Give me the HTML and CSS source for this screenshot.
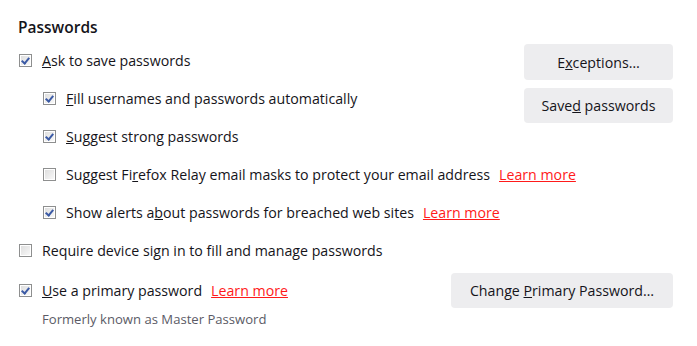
FILE: index.html
```html
<!DOCTYPE html>
<html lang="en">
<head>
<meta charset="utf-8">
<title>Passwords</title>
<link rel="stylesheet" href="styles.css">
</head>
<body>
<main class="section">
  <h2 class="title">Passwords</h2>
  <div class="top">
    <label class="row"><span class="cb checked"></span><span><u>A</u>sk to save passwords</span></label>
    <div class="buttons">
      <button class="btn btn-exc">E<u>x</u>ceptions…</button>
      <button class="btn btn-saved">Save<u>d</u> passwords</button>
    </div>
    <label class="row sub"><span class="cb checked"></span><span><u>F</u>ill usernames and passwords automatically</span></label>
    <label class="row sub full"><span class="cb checked"></span><span><u>S</u>uggest strong passwords</span></label>
    <label class="row sub full"><span class="cb"></span><span>Suggest Fi<u>r</u>efox Relay email masks to protect your email address</span><a class="link" href="#">Learn more</a></label>
    <label class="row sub full"><span class="cb checked"></span><span>Show alerts a<u>b</u>out passwords for breached web sites</span><a class="link" href="#">Learn more</a></label>
    <label class="row full"><span class="cb"></span><span>Require device sign in to fill and manage passwords</span></label>
  </div>
  <div class="primary">
    <label class="row"><span class="cb checked"></span><span><u>U</u>se a primary password</span><a class="link" href="#">Learn more</a></label>
    <button class="btn btn-primary">Change <u>P</u>rimary Password…</button>
  </div>
  <p class="desc">Formerly known as Master Password</p>
</main>
</body>
</html>
```
FILE: styles.css
```css
html, body {
  margin: 0;
  padding: 0;
  background: #ffffff;
}
body {
  font-family: "Open Sans", "Noto Sans", sans-serif;
  font-size: 14.2px;
  color: #15141a;
}
.section {
  padding: 14px 24px 0 19px;
}
.title {
  margin: 0 0 0 -1px;
  font-size: 15.5px;
  font-weight: 600;
  line-height: 27px;
}
.top {
  display: grid;
  grid-template-columns: 1fr auto;
  grid-auto-rows: 38px;
}
.row {
  display: flex;
  align-items: center;
  height: 38px;
  white-space: nowrap;
}
.row.sub {
  padding-left: 24px;
}
.row.full {
  grid-column: 1 / -1;
}
.cb {
  box-sizing: border-box;
  width: 13px;
  height: 13px;
  margin-right: 10px;
  border: 1px solid #8e8f8f;
  background: linear-gradient(135deg, #dcdcdc 0%, #f4f4f4 80%, #ffffff 100%);
  box-shadow: inset 0 0 0 1px #ffffff;
  flex: none;
  position: relative;
}
.cb.checked::after {
  content: "";
  position: absolute;
  left: 3px;
  top: 1px;
  width: 3px;
  height: 6px;
  border: solid #3b5aa5;
  border-width: 0 2px 2px 0;
  transform: rotate(40deg);
}
.link {
  margin-left: 9px;
  color: #ff1a1a;
  text-decoration: underline;
}
.buttons {
  grid-column: 2;
  grid-row: 1 / span 2;
  align-self: start;
  display: flex;
  flex-direction: column;
  gap: 8px;
  margin-top: 3px;
}
.btn {
  font: inherit;
  color: #15141a;
  background: #ededef;
  border: none;
  border-radius: 4px;
  height: 36px;
  padding: 0 10px;
}
.btn-exc, .btn-saved {
  width: 149px;
}
.btn-saved {
  height: 35px;
}
.primary {
  display: flex;
  justify-content: space-between;
  align-items: center;
  height: 42px;
}
.btn-primary {
  width: 222px;
  height: 35px;
}
.desc {
  margin: 0;
  padding-left: 23px;
  font-size: 13.1px;
  color: #5b5b66;
  line-height: 16px;
}
```
